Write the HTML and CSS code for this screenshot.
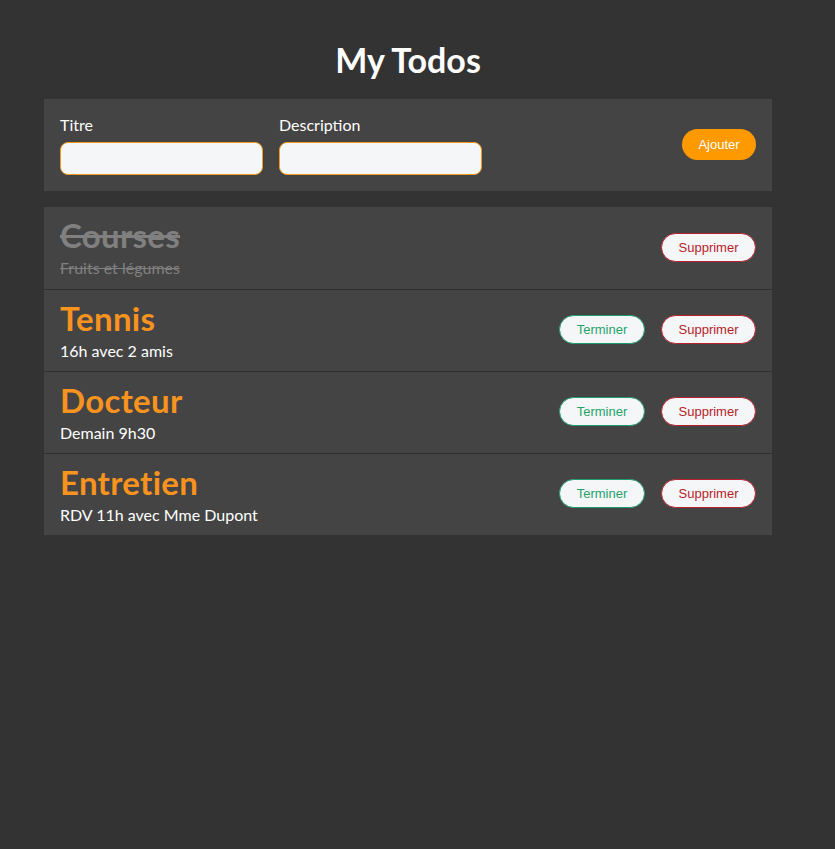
FILE: index.html
```html
<!DOCTYPE html>
<html lang="fr">
<head>
<meta charset="utf-8">
<title>My Todos</title>
<link rel="stylesheet" href="styles.css">
</head>
<body>
<div class="app">
  <h1 class="title">My Todos</h1>
  <form class="form">
    <div class="field">
      <label class="label">Titre</label>
      <input class="input" type="text">
    </div>
    <div class="field">
      <label class="label">Description</label>
      <input class="input" type="text">
    </div>
    <button type="button" class="btn-add">Ajouter</button>
  </form>
  <ul class="list">
    <li class="item done">
      <div class="text">
        <div class="item-title">Courses</div>
        <div class="item-desc">Fruits et légumes</div>
      </div>
      <div class="actions">
        <button type="button" class="btn btn-delete">Supprimer</button>
      </div>
    </li>
    <li class="item">
      <div class="text">
        <div class="item-title">Tennis</div>
        <div class="item-desc">16h avec 2 amis</div>
      </div>
      <div class="actions">
        <button type="button" class="btn btn-finish">Terminer</button>
        <button type="button" class="btn btn-delete">Supprimer</button>
      </div>
    </li>
    <li class="item">
      <div class="text">
        <div class="item-title">Docteur</div>
        <div class="item-desc">Demain 9h30</div>
      </div>
      <div class="actions">
        <button type="button" class="btn btn-finish">Terminer</button>
        <button type="button" class="btn btn-delete">Supprimer</button>
      </div>
    </li>
    <li class="item">
      <div class="text">
        <div class="item-title">Entretien</div>
        <div class="item-desc">RDV 11h avec Mme Dupont</div>
      </div>
      <div class="actions">
        <button type="button" class="btn btn-finish">Terminer</button>
        <button type="button" class="btn btn-delete">Supprimer</button>
      </div>
    </li>
  </ul>
</div>
</body>
</html>
```

FILE: styles.css
```css
html, body {
  margin: 0;
  padding: 0;
  background: #333333;
}
body {
  font-family: "Lato", "Noto Sans", sans-serif;
  color: #ffffff;
}
.app {
  width: 728px;
  margin-left: 44px;
  padding-top: 40px;
}
.title {
  margin: 0 0 19px;
  text-align: center;
  font-size: 34px;
  font-weight: 700;
  line-height: 40px;
  color: #ffffff;
}
.form {
  display: flex;
  align-items: center;
  gap: 16px;
  background: #444444;
  padding: 16px;
  height: 92px;
  box-sizing: border-box;
  margin: 0 0 16px;
}
.field {
  display: flex;
  flex-direction: column;
  gap: 7px;
}
.label {
  font-size: 16px;
  line-height: 20px;
  color: #ffffff;
}
.input {
  width: 203px;
  height: 33px;
  box-sizing: border-box;
  border: 1px solid #f39a1e;
  border-radius: 8px;
  background: #f5f6f8;
  outline: none;
  margin: 0;
}
.btn-add {
  margin-left: auto;
  margin-top: -2px;
  width: 74px;
  height: 31px;
  border: none;
  border-radius: 16px;
  background: #ff9900;
  color: #ffffff;
  font-family: "Liberation Sans", Arial, sans-serif;
  font-size: 13px;
  padding: 0;
}
.list {
  list-style: none;
  margin: 0;
  padding: 0;
  background: #444444;
}
.item {
  display: flex;
  align-items: center;
  height: 82px;
  box-sizing: border-box;
  padding: 0 16px;
  border-top: 1px solid #2f2f2f;
}
.item:first-child {
  border-top: none;
}
.text {
  flex: 1;
}
.item-title {
  font-size: 33px;
  font-weight: 700;
  line-height: 36px;
  letter-spacing: 0.3px;
  margin-bottom: 4px;
  color: #f7931e;
}
.item-desc {
  font-size: 16px;
  line-height: 22px;
  color: #ffffff;
}
.done .item-title,
.done .item-desc {
  color: #808080;
  text-decoration: line-through;
}
.actions {
  display: flex;
  gap: 16px;
  margin-top: -2px;
}
.btn {
  height: 29px;
  box-sizing: border-box;
  border-radius: 15px;
  background: #f5f6f8;
  font-family: "Liberation Sans", Arial, sans-serif;
  font-size: 13px;
  padding: 0;
}
.btn-finish {
  width: 86px;
  border: 1px solid #1f9a6a;
  color: #23a36a;
}
.btn-delete {
  width: 95px;
  border: 1px solid #b8202a;
  color: #b51d28;
}
```
